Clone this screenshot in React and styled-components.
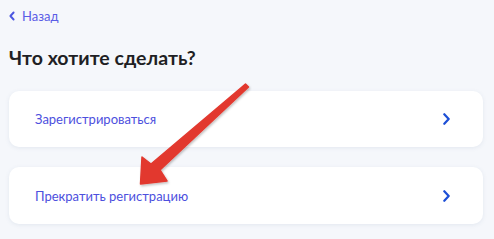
import React from "react";
import styled, { createGlobalStyle } from "styled-components";

const GlobalStyle = createGlobalStyle`
  html, body {
    margin: 0;
    padding: 0;
    background: #f5f7fb;
    font-family: Lato, "Noto Sans", sans-serif;
  }
`;

const Page = styled.div`
  position: relative;
  width: 494px;
  height: 239px;
  box-sizing: border-box;
  padding: 7px 11px 0 9px;
  overflow: hidden;
`;

const Back = styled.a`
  display: flex;
  align-items: center;
  gap: 7px;
  height: 18px;
  font-size: 13px;
  color: #5a5ce6;
  text-decoration: none;
  cursor: pointer;
`;

const Title = styled.h1`
  margin: 21px 0 0;
  font-size: 19.5px;
  line-height: 24px;
  font-weight: 700;
  color: #1f1f24;
`;

const List = styled.div`
  display: flex;
  flex-direction: column;
  gap: 20px;
  margin-top: 21px;
`;

const Card = styled.div`
  display: flex;
  align-items: center;
  justify-content: space-between;
  height: ${(p) => p.h || 56}px;
  padding: 0 33px 0 26px;
  background: #ffffff;
  border-radius: 10px;
  box-shadow: 0 1px 4px rgba(100, 120, 160, 0.12);
  cursor: pointer;
`;

const CardText = styled.span`
  font-size: 13px;
  color: #4d50de;
`;

const Chevron = ({ size = 12, w = 2.2 }) => (
  <svg width={size * 0.6} height={size} viewBox="0 0 7 12" fill="none">
    <path d="M1.2 1.2 L5.6 6 L1.2 10.8" stroke="#1d4fd6" strokeWidth={w} strokeLinecap="round" strokeLinejoin="round" />
  </svg>
);

const BackChevron = () => (
  <svg width="6" height="10" viewBox="0 0 6 10" fill="none">
    <path d="M4.6 1.5 L1.4 5 L4.6 8.5" stroke="#4a56e0" strokeWidth="1.9" strokeLinecap="round" strokeLinejoin="round" />
  </svg>
);

const Annotation = styled.svg`
  position: absolute;
  left: 0;
  top: 0;
  pointer-events: none;
`;

export default function App() {
  return (
    <>
      <GlobalStyle />
      <Page>
        <Back>
          <BackChevron />
          Назад
        </Back>
        <Title>Что хотите сделать?</Title>
        <List>
          <Card h={56}>
            <CardText>Зарегистрироваться</CardText>
            <Chevron />
          </Card>
          <Card h={57}>
            <CardText>Прекратить регистрацию</CardText>
            <Chevron />
          </Card>
        </List>
        <Annotation width="494" height="239" viewBox="0 0 494 239">
          <defs>
            <filter id="sh" x="-20%" y="-20%" width="140%" height="140%">
              <feDropShadow dx="1" dy="1.5" stdDeviation="1.2" floodColor="#000" floodOpacity="0.25" />
            </filter>
          </defs>
          <path
            d="M245.5 84 L248.5 87 L160 170 L167 181 L140.5 184 L142 157 L151 164 Z"
            fill="#e2382e"
            strokeLinejoin="round"
            stroke="#e2382e"
            strokeWidth="1.5"
            filter="url(#sh)"
          />
        </Annotation>
      </Page>
    </>
  );
}
